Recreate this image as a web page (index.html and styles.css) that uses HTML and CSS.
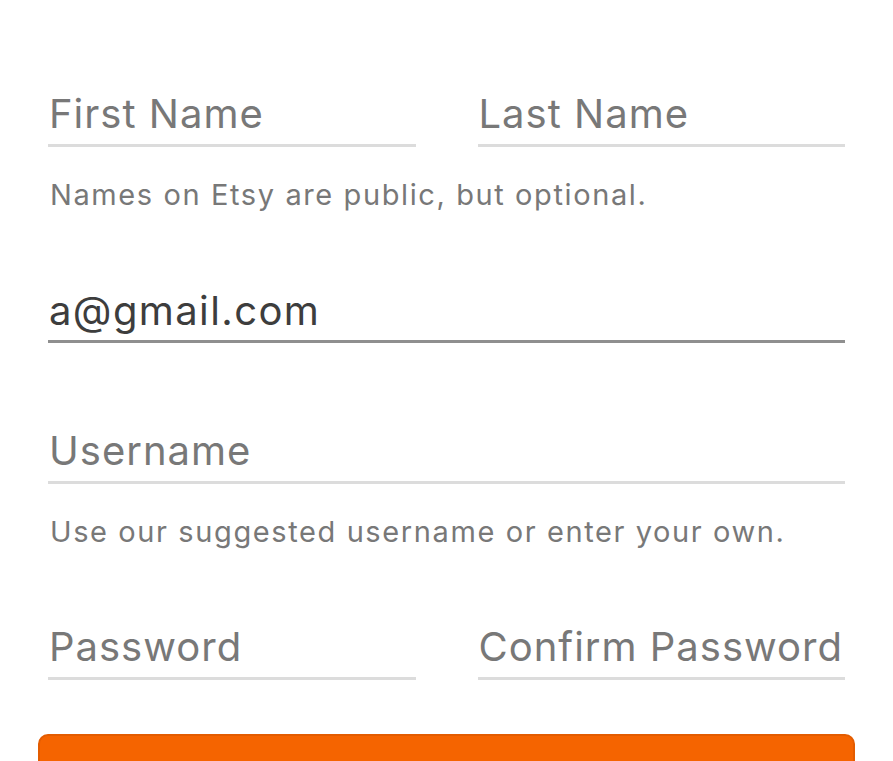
FILE: index.html
```html
<!DOCTYPE html>
<html lang="en">
<head>
<meta charset="utf-8">
<title>Register</title>
<link rel="stylesheet" href="styles.css">
</head>
<body>
<form class="form">
  <div class="row two">
    <input class="field" type="text" placeholder="First Name">
    <input class="field" type="text" placeholder="Last Name">
  </div>
  <p class="help">Names on Etsy are public, but optional.</p>

  <div class="row email-row">
    <input class="field filled" type="email" value="a@gmail.com">
  </div>

  <div class="row user-row">
    <input class="field" type="text" placeholder="Username">
  </div>
  <p class="help">Use our suggested username or enter your own.</p>

  <div class="row two pass-row">
    <input class="field" type="password" placeholder="Password">
    <input class="field" type="password" placeholder="Confirm Password">
  </div>

  <button class="submit" type="button"></button>
</form>
</body>
</html>
```

FILE: styles.css
```css
html, body {
  margin: 0;
  padding: 0;
  background: #fff;
  overflow: hidden;
}

.form {
  display: flex;
  flex-direction: column;
  padding: 92px 48px 0;
  font-family: "Inter", "Liberation Sans", sans-serif;
}

.row {
  display: grid;
  grid-template-columns: 1fr;
}

.row.two {
  grid-template-columns: 1fr 1fr;
  column-gap: 62px;
}

.field {
  display: block;
  width: 100%;
  box-sizing: border-box;
  height: 55px;
  margin: 0;
  padding: 0 0 9px 1px;
  border: none;
  border-bottom: 3px solid #dcdcdc;
  background: transparent;
  font-family: inherit;
  font-size: 40px;
  letter-spacing: 1px;
  color: #444;
  outline: none;
}

.field::placeholder {
  color: #787878;
  opacity: 1;
}

.field.filled {
  border-bottom-color: #8f8f8f;
  color: #3d3d3d;
  padding-bottom: 7px;
  letter-spacing: 1.4px;
}

.help {
  margin: 30px 0 0 2px;
  font-size: 29px;
  letter-spacing: 1.6px;
  color: #787878;
  line-height: 36px;
}

.email-row { margin-top: 75px; }
.user-row { margin-top: 86px; }
.pass-row { margin-top: 75px; }

.submit {
  margin: 54px -10px 0;
  height: 60px;
  border: 2px solid #e35c00;
  border-radius: 10px;
  background: #f56400;
  padding: 0;
}
```
